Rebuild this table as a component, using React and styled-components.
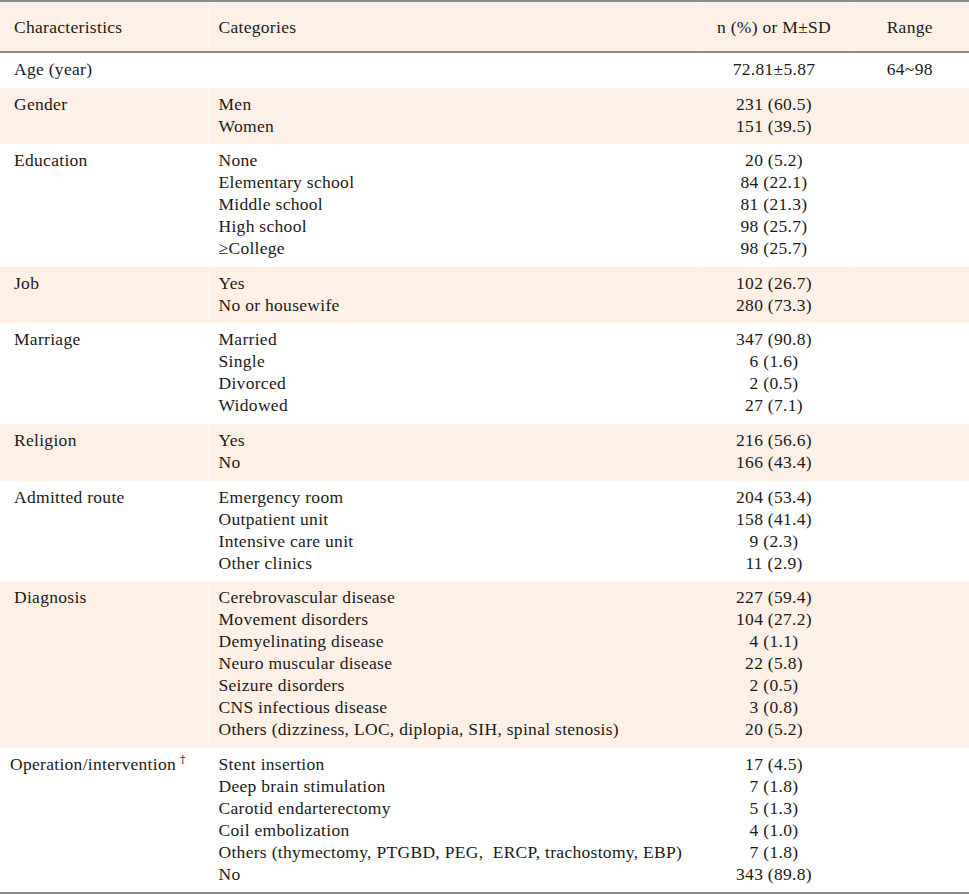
import React from 'react'
import styled, { createGlobalStyle } from 'styled-components'

const rows = [
    { label: 'Age (year)', items: [''], values: ['72.81±5.87'], range: '64~98' },
    { label: 'Gender', shaded: true, items: ['Men', 'Women'], values: ['231 (60.5)', '151 (39.5)'] },
    {
        label: 'Education',
        items: ['None', 'Elementary school', 'Middle school', 'High school', '≥College'],
        values: ['20 (5.2)', '84 (22.1)', '81 (21.3)', '98 (25.7)', '98 (25.7)'],
    },
    { label: 'Job', shaded: true, items: ['Yes', 'No or housewife'], values: ['102 (26.7)', '280 (73.3)'] },
    {
        label: 'Marriage',
        items: ['Married', 'Single', 'Divorced', 'Widowed'],
        values: ['347 (90.8)', '6 (1.6)', '2 (0.5)', '27 (7.1)'],
    },
    { label: 'Religion', shaded: true, items: ['Yes', 'No'], values: ['216 (56.6)', '166 (43.4)'] },
    {
        label: 'Admitted route',
        items: ['Emergency room', 'Outpatient unit', 'Intensive care unit', 'Other clinics'],
        values: ['204 (53.4)', '158 (41.4)', '9 (2.3)', '11 (2.9)'],
    },
    {
        label: 'Diagnosis',
        shaded: true,
        items: [
            'Cerebrovascular disease',
            'Movement disorders',
            'Demyelinating disease',
            'Neuro muscular disease',
            'Seizure disorders',
            'CNS infectious disease',
            'Others (dizziness, LOC, diplopia, SIH, spinal stenosis)',
        ],
        values: ['227 (59.4)', '104 (27.2)', '4 (1.1)', '22 (5.8)', '2 (0.5)', '3 (0.8)', '20 (5.2)'],
    },
    {
        label: 'Operation/intervention',
        note: '†',
        tight: true,
        items: [
            'Stent insertion',
            'Deep brain stimulation',
            'Carotid endarterectomy',
            'Coil embolization',
            'Others (thymectomy, PTGBD, PEG,  ERCP, trachostomy, EBP)',
            'No',
        ],
        values: ['17 (4.5)', '7 (1.8)', '5 (1.3)', '4 (1.0)', '7 (1.8)', '343 (89.8)'],
    },
]

function App() {
    return <>
        <GlobalStyle />
        <Table>
            <colgroup>
                <col style={{ width: 208 }} />
                <col style={{ width: 490 }} />
                <col style={{ width: 152 }} />
                <col style={{ width: 119 }} />
            </colgroup>
            <thead>
                <HeadRow>
                    <HeadCell>Characteristics</HeadCell>
                    <HeadCell>Categories</HeadCell>
                    <HeadCell $center>n (%) or M±SD</HeadCell>
                    <HeadCell $center>Range</HeadCell>
                </HeadRow>
            </thead>
            <tbody>
                {rows.map(row => (
                    <Row key={row.label} $shaded={row.shaded}>
                        <Cell $tight={row.tight}>
                            {row.label}
                            {row.note && <Note>{row.note}</Note>}
                        </Cell>
                        <Cell>
                            {row.items.map((item, i) => <Line key={i}>{item || '\u00a0'}</Line>)}
                        </Cell>
                        <Cell $center>
                            {row.values.map((v, i) => <Line key={i}>{v}</Line>)}
                        </Cell>
                        <Cell $center>{row.range && <Line>{row.range}</Line>}</Cell>
                    </Row>
                ))}
            </tbody>
        </Table>
    </>
}

const GlobalStyle = createGlobalStyle`
    body {
        margin: 0;
        background: #ffffff;
        font-family: "Liberation Serif", "DejaVu Serif", serif;
        color: #1a1a1a;
    }
`;

const Table = styled.table`
    width: 969px;
    table-layout: fixed;
    border-collapse: collapse;
    border-top: 2px solid #8a8a8a;
    border-bottom: 2px solid #8a8a8a;
    font-size: 17.5px;
    letter-spacing: 0.3px;
    line-height: 22px;
`;

const HeadRow = styled.tr`
    background: #fdf0e6;
    border-bottom: 2px solid #8a8a8a;
`;

const HeadCell = styled.th`
    font-weight: normal;
    text-align: ${ p => p.$center ? 'center' : 'left' };
    padding: 14px 10px 13px;
    height: 22px;
    &:first-child {
        padding-left: 14px;
    }
    & + & {
        border-left: 1px solid #fef6f0;
    }
`;

const Cell = styled.td`
    vertical-align: top;
    text-align: ${ p => p.$center ? 'center' : 'left' };
    padding: 5px 10px 7.6px;
    &:first-child {
        padding-left: ${ p => p.$tight ? '10px' : '14px' };
        white-space: nowrap;
    }
    & + & {
        border-left: 1px solid #ffffff;
    }
`;

const Row = styled.tr`
    background: ${ p => p.$shaded ? '#fdf0e6' : '#ffffff' };
    ${ Cell } + ${ Cell } {
        border-left-color: ${ p => p.$shaded ? '#fef6f0' : '#ffffff' };
    }
`;

const Line = styled.div`
    white-space: pre;
`;

const Note = styled.sup`
    font-family: "DejaVu Serif", serif;
    font-size: 11px;
    color: #1a1a1a;
    line-height: 0;
    margin-left: 4px;
    vertical-align: 7px;
`;

export default App
